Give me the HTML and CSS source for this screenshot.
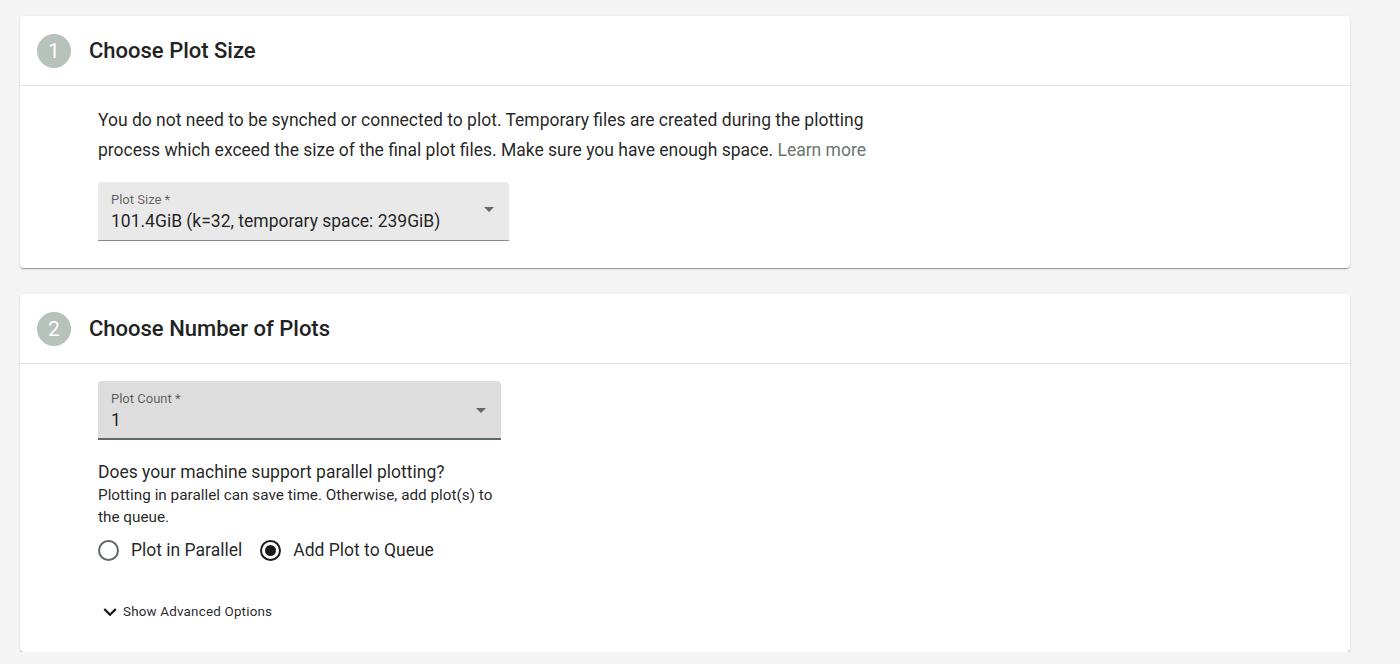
FILE: index.html
```html
<!DOCTYPE html>
<html>
<head>
<meta charset="utf-8">
<link rel="stylesheet" href="styles.css">
</head>
<body>
<div class="page">
  <section class="card">
    <div class="card-head">
      <span class="step">1</span>
      <h2 class="title">Choose Plot Size</h2>
    </div>
    <div class="card-body body-1">
      <p class="intro">You do not need to be synched or connected to plot. Temporary files are created during the plotting process which exceed the size of the final plot files. Make sure you have enough space. <a class="link">Learn more</a></p>
      <div class="select select-size">
        <div class="select-text">
          <span class="select-label">Plot Size *</span>
          <span class="select-value">101.4GiB (k=32, temporary space: 239GiB)</span>
        </div>
        <svg class="caret" width="24" height="24" viewBox="0 0 24 24"><path d="M7 10l5 5 5-5z"/></svg>
      </div>
    </div>
  </section>

  <section class="card">
    <div class="card-head">
      <span class="step">2</span>
      <h2 class="title">Choose Number of Plots</h2>
    </div>
    <div class="card-body body-2">
      <div class="select select-count">
        <div class="select-text">
          <span class="select-label">Plot Count *</span>
          <span class="select-value">1</span>
        </div>
        <svg class="caret" width="24" height="24" viewBox="0 0 24 24"><path d="M7 10l5 5 5-5z"/></svg>
      </div>
      <p class="question">Does your machine support parallel plotting?</p>
      <p class="hint">Plotting in parallel can save time. Otherwise, add plot(s) to the queue.</p>
      <div class="radios">
        <label class="radio"><span class="dot"></span>Plot in Parallel</label>
        <label class="radio checked"><span class="dot"></span>Add Plot to Queue</label>
      </div>
      <div class="advanced">
        <svg width="26" height="26" viewBox="0 0 24 24"><path d="M7.41 8.59L12 13.17l4.59-4.58L18 10l-6 6-6-6 1.41-1.41z"/></svg>
        <span>Show Advanced Options</span>
      </div>
    </div>
  </section>
</div>
</body>
</html>
```

FILE: styles.css
```css
* { box-sizing: border-box; }
html, body { margin: 0; padding: 0; }
body {
  background: #f5f5f5;
  font-family: Roboto, "Liberation Sans", Arial, sans-serif;
  color: rgba(0, 0, 0, 0.87);
}
.page {
  display: flex;
  flex-direction: column;
  gap: 26px;
  padding: 16px 50px 0 20px;
}
.card {
  background: #fff;
  border-radius: 4px;
  box-shadow: 0 2px 1px -1px rgba(0,0,0,0.2), 0 1px 1px 0 rgba(0,0,0,0.14), 0 1px 3px 0 rgba(0,0,0,0.12);
}
.card-head {
  height: 70px;
  display: flex;
  align-items: center;
  padding-left: 17px;
  border-bottom: 1px solid #e4e4e4;
}
.step {
  width: 34px;
  height: 34px;
  border-radius: 50%;
  background: #b7c2ba;
  color: #fff;
  font-size: 21px;
  display: flex;
  align-items: center;
  justify-content: center;
}
.title {
  margin: 0 0 0 18px;
  font-size: 22px;
  font-weight: 500;
  color: #222;
}
.card-body {
  padding: 19px 78px 27px;
}
.body-2 { padding-top: 17px; padding-bottom: 27px; }
.intro {
  margin: 0 0 17px;
  font-size: 17.5px;
  line-height: 30px;
  max-width: 795px;
}
.link { color: #6b766f; }
.select {
  height: 59px;
  display: flex;
  align-items: center;
  justify-content: space-between;
  padding: 0 8px 0 13px;
  border-radius: 4px 4px 0 0;
  background: #e9e9e9;
  border-bottom: 1px solid #8a8a8a;
}
.select-size { width: 411px; }
.select-count {
  width: 403px;
  background: #dddddd;
  border-bottom: 2px solid #5e6a62;
}
.select-text {
  display: flex;
  flex-direction: column;
  padding-top: 3px;
}
.select-label {
  font-size: 13px;
  line-height: 15px;
  color: rgba(0, 0, 0, 0.6);
}
.select-value {
  font-size: 17.5px;
  line-height: 24px;
  margin-top: 2px;
}
.caret { fill: #5e6a62; margin-bottom: 4px; }
.select-count .caret { margin-bottom: 0; }
.question {
  margin: 20px 0 0;
  font-size: 17.5px;
  line-height: 24px;
}
.hint {
  margin: 0;
  width: 410px;
  font-size: 15.3px;
  line-height: 22px;
}
.radios {
  display: flex;
  gap: 18px;
  margin-top: 10px;
}
.radio {
  display: flex;
  align-items: center;
  gap: 12px;
  font-size: 17.5px;
  line-height: 24px;
}
.dot {
  width: 21px;
  height: 21px;
  border-radius: 50%;
  border: 2px solid #5e6a62;
  display: flex;
  align-items: center;
  justify-content: center;
}
.checked .dot { border-color: #1b1b1b; }
.checked .dot::after {
  content: "";
  width: 11px;
  height: 11px;
  border-radius: 50%;
  background: #1b1b1b;
}
.advanced {
  display: flex;
  align-items: center;
  gap: 0;
  margin-top: 37px;
  margin-left: -1px;
  font-size: 13.4px;
  line-height: 26px;
  letter-spacing: 0.2px;
}
.advanced svg { fill: #111; }
```
